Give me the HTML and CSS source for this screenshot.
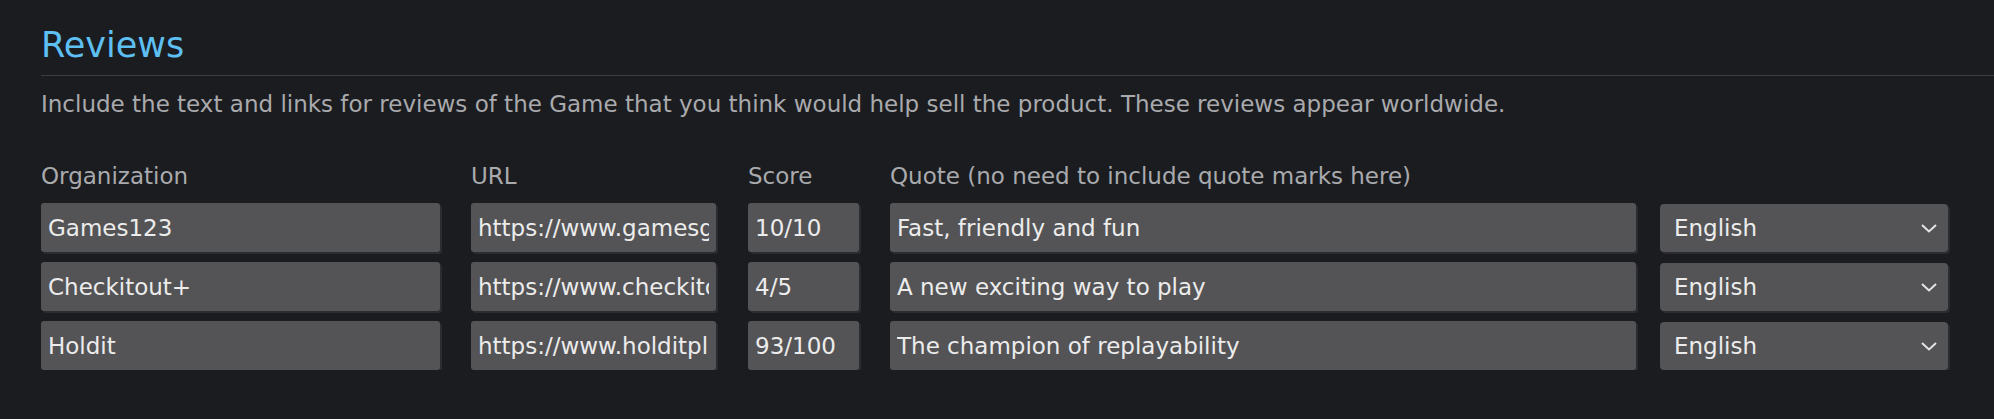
FILE: index.html
```html
<!DOCTYPE html>
<html lang="en">
<head>
<meta charset="utf-8">
<title>Reviews</title>
<link rel="stylesheet" href="styles.css">
</head>
<body>
<section class="reviews">
  <h2 class="title">Reviews</h2>
  <p class="desc">Include the text and links for reviews of the Game that you think would help sell the product. These reviews appear worldwide.</p>
  <div class="grid">
    <div class="label">Organization</div>
    <div class="label">URL</div>
    <div class="label">Score</div>
    <div class="label">Quote (no need to include quote marks here)</div>
    <div class="label"></div>

    <input class="field f-org" type="text" value="Games123">
    <input class="field f-url" type="text" value="https://www.gamesgalore123.com/review">
    <input class="field f-score" type="text" value="10/10">
    <input class="field f-quote" type="text" value="Fast, friendly and fun">
    <div class="lang"><span>English</span><svg class="chev" width="16" height="9" viewBox="0 0 16 9"><polyline points="1,1 8,7.5 15,1" fill="none" stroke="#e4e4e4" stroke-width="2"/></svg></div>

    <input class="field f-org" type="text" value="Checkitout+">
    <input class="field f-url" type="text" value="https://www.checkitoutplus.com/review">
    <input class="field f-score" type="text" value="4/5">
    <input class="field f-quote" type="text" value="A new exciting way to play">
    <div class="lang"><span>English</span><svg class="chev" width="16" height="9" viewBox="0 0 16 9"><polyline points="1,1 8,7.5 15,1" fill="none" stroke="#e4e4e4" stroke-width="2"/></svg></div>

    <input class="field f-org" type="text" value="Holdit">
    <input class="field f-url" type="text" value="https://www.holditplay.com/review">
    <input class="field f-score" type="text" value="93/100">
    <input class="field f-quote" type="text" value="The champion of replayability">
    <div class="lang"><span>English</span><svg class="chev" width="16" height="9" viewBox="0 0 16 9"><polyline points="1,1 8,7.5 15,1" fill="none" stroke="#e4e4e4" stroke-width="2"/></svg></div>
  </div>
</section>
</body>
</html>
```

FILE: styles.css
```css
html, body {
  margin: 0;
  padding: 0;
  background: #1b1c20;
}

body {
  font-family: "DejaVu Sans", "Noto Sans", Arial, sans-serif;
  color: #a9aaad;
}

.reviews {
  padding: 23px 0 0 41px;
}

.title {
  margin: 0;
  font-size: 35px;
  line-height: 44px;
  font-weight: 400;
  color: #5ebff2;
  padding-bottom: 8px;
  border-bottom: 1px solid #3b3d42;
}

.desc {
  margin: 13px 0 0 0;
  font-size: 23px;
  line-height: 30px;
  color: #a9aaad;
}

.grid {
  margin-top: 42px;
  display: grid;
  grid-template-columns: 430px 277px 142px 770px 288px;
  row-gap: 10px;
  align-items: start;
}

.label {
  font-size: 23px;
  line-height: 30px;
  color: #a9aaad;
  margin-bottom: 2px;
  white-space: nowrap;
}

.field {
  box-sizing: border-box;
  height: 49px;
  margin: 0;
  border: none;
  border-radius: 3px;
  background: #545456;
  box-shadow: 2px 2px 0 #2b2c30;
  color: #ececec;
  font-family: "DejaVu Sans", "Noto Sans", Arial, sans-serif;
  font-size: 23px;
  padding: 0 7px;
  outline: none;
}

.f-org { width: 399px; }
.f-url { width: 245px; }
.f-score { width: 111px; }
.f-quote { width: 746px; }

.lang {
  box-sizing: border-box;
  width: 288px;
  height: 48px;
  margin-top: 1px;
  border-radius: 4px;
  background: #545456;
  box-shadow: 2px 2px 0 #2b2c30;
  color: #ececec;
  font-size: 23px;
  display: flex;
  align-items: center;
  justify-content: space-between;
  padding: 0 11px 0 14px;
}

.chev {
  display: block;
}
```
